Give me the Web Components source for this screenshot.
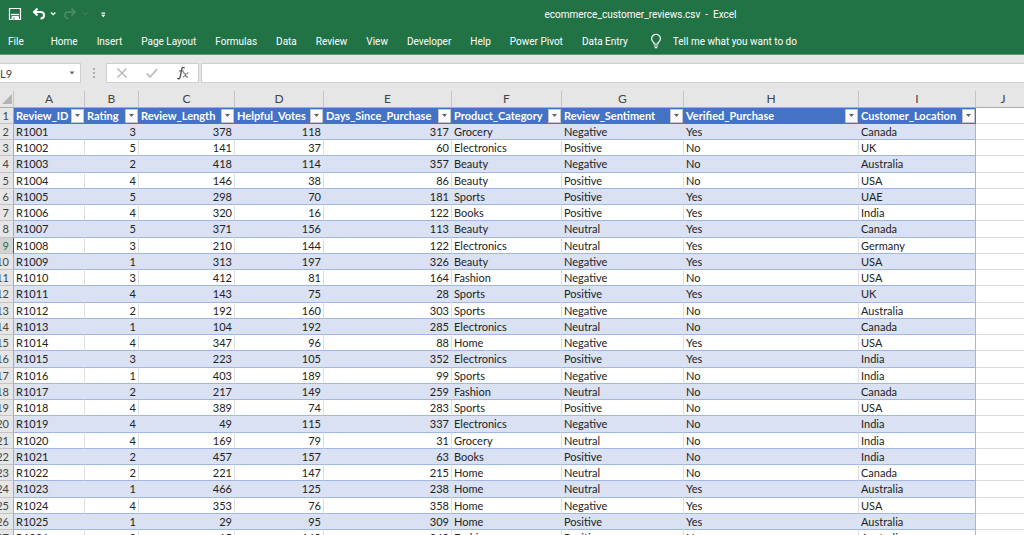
<!DOCTYPE html>
<html lang="en">
<head>
<meta charset="utf-8">
<title>ecommerce_customer_reviews.csv - Excel</title>
<style>
html, body { margin: 0; height: 100%; }
body { overflow: hidden; background: #fff; }
</style>
</head>
<body>
<excel-app></excel-app>

<template id="t-app">
  <style>
    :host { display: flex; flex-direction: column; height: 100%; overflow: hidden; font-family: Roboto, "Open Sans", sans-serif; font-size: 10px; color: #fff; }
  </style>
  <title-bar>ecommerce_customer_reviews.csv&nbsp; -&nbsp; Excel</title-bar>
  <ribbon-tabs>
    <ribbon-tab>File</ribbon-tab>
    <ribbon-tab>Home</ribbon-tab>
    <ribbon-tab>Insert</ribbon-tab>
    <ribbon-tab>Page Layout</ribbon-tab>
    <ribbon-tab>Formulas</ribbon-tab>
    <ribbon-tab>Data</ribbon-tab>
    <ribbon-tab>Review</ribbon-tab>
    <ribbon-tab>View</ribbon-tab>
    <ribbon-tab>Developer</ribbon-tab>
    <ribbon-tab>Help</ribbon-tab>
    <ribbon-tab>Power Pivot</ribbon-tab>
    <ribbon-tab>Data Entry</ribbon-tab>
  </ribbon-tabs>
  <formula-bar></formula-bar>
  <sheet-grid></sheet-grid>
</template>

<template id="t-title">
  <style>
    :host { display: grid; grid-template-columns: 1fr auto 1fr; align-items: center; height: 28px; background: #217346; }
    .tools { display: flex; align-items: center; padding-left: 8px; }
    button { display: flex; align-items: center; border: 0; padding: 0; background: none; color: inherit; }
    .gap { margin-left: 10px; }
    .off { color: #4c8f6b; }
    .name { grid-column: 2; padding-left: 257px; }
    svg { display: block; }
  </style>
  <div class="tools">
    <button aria-label="Save"><svg width="14" height="14" viewBox="0 0 14 14" fill="none" stroke="currentColor"><path d="M1.500 1.500h11v11h-11z" stroke-width="1.200"/><path d="M3 7.500h8" stroke-width="1.400"/><path d="M4 12.500v-3h6.500v3z" fill="currentColor"/><path d="M6 10.500v2" stroke="#217346"/></svg></button>
    <button class="gap" aria-label="Undo"><svg width="14" height="14" viewBox="0 0 14 14" fill="none" stroke="currentColor" stroke-width="2"><path d="M5.500 1.500L2 5l3.500 3.500M2 5h6.500c2 0 3.500 1.300 3.500 3.200s-1.500 3.300-3.500 3.300"/></svg></button>
    <button aria-label="Undo list"><svg width="14" height="14" viewBox="0 0 14 14" fill="none" stroke="currentColor" stroke-width="1.300"><path d="M5 5.500l2.200 2.200L9.400 5.500"/></svg></button>
    <button class="off" aria-label="Redo"><svg width="18" height="14" viewBox="0 0 18 14" fill="none" stroke="currentColor" stroke-width="1.500"><path d="M11.500 1.500L15 5l-3.500 3.500M15 5H8.500C6.500 5 5 6.300 5 8.200s1.500 3.300 3.500 3.300"/></svg></button>
    <button class="off" aria-label="Redo list"><svg width="14" height="14" viewBox="0 0 14 14" fill="none" stroke="currentColor"><path d="M5 5.500l2.200 2.200L9.400 5.500"/></svg></button>
    <button aria-label="Customize toolbar"><svg width="22" height="14" viewBox="0 0 22 14" fill="currentColor"><path d="M9.500 5.500h3.600v1.200H9.500zM9.200 7.800h4.200l-2.100 2.400z"/></svg></button>
  </div>
  <span class="name"><slot></slot></span>
</template>

<template id="t-tabs">
  <style>
    :host { display: flex; align-items: center; gap: 19px; height: 26px; padding: 0 8px; background: #217346; }
    ::slotted(:first-child) { margin-right: 8px; }
    button { display: flex; align-items: center; gap: 10px; border: 0; padding: 0 0 0 2px; background: none; font: inherit; color: inherit; white-space: nowrap; }
    svg { display: block; }
  </style>
  <slot></slot>
  <button><svg width="14" height="16" viewBox="0 0 14 16" fill="none" stroke="currentColor" stroke-width="1.200"><path d="M5 11V9.800C3.500 8.800 2.600 7.500 2.600 5.800a4.400 4.400 0 0 1 8.800 0c0 1.700-.9 3-2.400 4V11z"/><path d="M5 13h4M5.700 14.600h2.600"/></svg>Tell me what you want to do</button>
</template>

<template id="t-tab">
  <style>
    :host { display: block; }
    button { display: block; border: 0; padding: 0; background: none; font: inherit; color: inherit; white-space: nowrap; }
  </style>
  <button><slot></slot></button>
</template>

<template id="t-formula">
  <style>
    :host { display: flex; align-items: center; padding: 8px 0; background: #e6e6e6; border-top: 1px solid #5c9a78; color: #444; }
    .box { display: flex; align-items: center; height: 18px; background: #fff; border: 1px solid #cfcfcf; }
    .name { width: 80px; border-left: 0; }
    input { flex: 1; min-width: 0; width: 0; height: 18px; box-sizing: border-box; border: 0; padding: 0; background: none; outline: 0; font: 11px Lato, sans-serif; color: #444; }
    button { display: flex; justify-content: center; border: 0; padding: 0; background: none; flex: 1; }
    .name button { flex: none; width: 16px; }
    .dots { width: 25px; }
    .tools { width: 91px; margin-right: 2px; }
    .text { flex: 1; border-right: 0; }
    svg { display: block; }
  </style>
  <div class="box name"><input aria-label="Name box" value="L9"><button aria-label="Names"><svg width="8" height="6" viewBox="0 0 8 6" fill="#666"><path d="M1.500 1.500h5L4 4.500z"/></svg></button></div>
  <svg class="dots" width="25" height="12" viewBox="0 0 25 12" fill="#aaa"><path d="M12 1h2v2h-2zM12 5h2v2h-2zM12 9h2v2h-2z"/></svg>
  <div class="box tools">
    <button aria-label="Cancel"><svg width="12" height="12" viewBox="0 0 12 12" fill="none" stroke="#bababa" stroke-width="1.500"><path d="M1.500 1.500l9 9M10.500 1.500l-9 9"/></svg></button>
    <button aria-label="Enter"><svg width="12" height="12" viewBox="0 0 12 12" fill="none" stroke="#bababa" stroke-width="1.800"><path d="M.8 6.500l3.200 3.500L11.200 2"/></svg></button>
    <button aria-label="Insert function"><svg width="14" height="14" viewBox="0 0 14 14" fill="none" stroke="#555" stroke-linecap="round"><path d="M8.200 1.800C6.900.8 6 1.800 5.700 3.400L4.300 10.400C4 12.300 3 13.300 1.700 12.500" stroke-width="1.400"/><path d="M3.500 5h4" /><path d="M7.300 6.800c1.500-.5 1.700.5 2.200 2.300s.8 2.800 2.300 1.900M12 6.700C10.300 6.800 9 10.900 7.200 11.200"/></svg></button>
  </div>
  <div class="box text"><input aria-label="Formula bar"></div>
</template>

<template id="t-grid">
  <style>
    :host { display: block; flex: 1; min-height: 0; overflow: hidden; background: #e6e6e6; font: 11px/14px Lato, "Liberation Sans", sans-serif; color: #222; }
    table { width: 100%; table-layout: fixed; border-collapse: separate; border-spacing: 0; background: #fff; }
    th, td { box-sizing: border-box; height: 16px; padding: 0 2px; white-space: nowrap; overflow: hidden; text-align: left; font-weight: 400; line-height: 14px; border-bottom: 1px solid #dcdcdc; border-right: 1px solid #dedede; }
    tbody tr:nth-child(4n) > * { height: 17px; }
    thead th { height: 17px; background: #e6e6e6; text-align: center; font-size: 12px; color: #444; border-right-color: #c4c4c4; border-bottom-color: #ababab; }
    thead th:last-child { padding-left: 8px; border-right: 0; }
    .row { background: #e6e6e6; color: #444; padding: 0; border-right-color: #ababab; border-bottom-color: #c4c4c4; }
    .row span { display: flex; justify-content: flex-end; width: 9px; }
    .row.sel { background: #d2d2d2; color: #217346; border-right-color: #217346; }
    .corner svg { display: block; margin-left: auto; }
    thead .corner { padding: 0; }
    td.n { text-align: right; }
    tr.data td { border-bottom-color: #9fb7e2; }
    tr.band td { background: #d9e1f2; border-right-color: #d9e1f2; }
    tr.data td.last { border-right-color: #9fb7e2; }
    tr td.out, tr.band td.out { background: #fff; border-bottom-color: #dcdcdc; border-right: 0; }
    .fields th.f { background: #4472c4; color: #fff; font-weight: 700; border-color: #4472c4; padding-right: 0; }
    .f div { display: flex; align-items: center; justify-content: space-between; height: 15px; }
    .f button { flex: none; display: flex; align-items: center; justify-content: center; width: 13px; height: 14px; border: 1px solid #c6c6c6; padding: 0; background: #fafafa; }
  </style>
  <table>
    <colgroup></colgroup>
    <thead><tr></tr></thead>
    <tbody></tbody>
  </table>
</template>

<script>
const define = (name, id, setup) => customElements.define(name, class extends HTMLElement {
  constructor() {
    super();
    this.attachShadow({ mode: 'open' }).append(document.getElementById(id).content.cloneNode(true));
    if (setup) setup(this.shadowRoot);
  }
});

const columns = [['A', 71, 'Review_ID'], ['B', 54, 'Rating'], ['C', 96, 'Review_Length'], ['D', 89, 'Helpful_Votes'], ['E', 128, 'Days_Since_Purchase'], ['F', 110, 'Product_Category'], ['G', 122, 'Review_Sentiment'], ['H', 175, 'Verified_Purchase'], ['I', 117, 'Customer_Location']];

const reviews = `3,378,118,317,Grocery,Negative,Yes,Canada
5,141,37,60,Electronics,Positive,No,UK
2,418,114,357,Beauty,Negative,No,Australia
4,146,38,86,Beauty,Positive,No,USA
5,298,70,181,Sports,Positive,Yes,UAE
4,320,16,122,Books,Positive,Yes,India
5,371,156,113,Beauty,Neutral,Yes,Canada
3,210,144,122,Electronics,Neutral,Yes,Germany
1,313,197,326,Beauty,Negative,Yes,USA
3,412,81,164,Fashion,Negative,No,USA
4,143,75,28,Sports,Positive,Yes,UK
2,192,160,303,Sports,Negative,No,Australia
1,104,192,285,Electronics,Neutral,No,Canada
4,347,96,88,Home,Negative,Yes,USA
3,223,105,352,Electronics,Positive,Yes,India
1,403,189,99,Sports,Negative,No,India
2,217,149,259,Fashion,Neutral,No,Canada
4,389,74,283,Sports,Positive,No,USA
4,49,115,337,Electronics,Negative,No,India
4,169,79,31,Grocery,Neutral,No,India
2,457,157,63,Books,Positive,No,India
2,221,147,215,Home,Neutral,No,Canada
1,466,125,238,Home,Neutral,Yes,Australia
4,353,76,358,Home,Negative,Yes,USA
1,29,95,309,Home,Positive,Yes,Australia
3,15,160,340,Fashion,Positive,No,Australia`.split('\n').map((line, i) => ['R' + (1001 + i), ...line.split(',')]);

define('ribbon-tab', 't-tab');
define('ribbon-tabs', 't-tabs');
define('title-bar', 't-title');
define('formula-bar', 't-formula');
define('sheet-grid', 't-grid', root => {
  root.querySelector('colgroup').innerHTML = '<col style="width:14px">' + columns.map(c => `<col style="width:${c[1]}px">`).join('') + '<col>';
  root.querySelector('thead tr').innerHTML = '<th class="corner"><svg width="12" height="12" viewBox="0 0 12 12"><path d="M11 1v10H1z" fill="#b4b4b4"/></svg></th>' + columns.map(c => `<th scope="col">${c[0]}</th>`).join('') + '<th scope="col">J</th>';
  const rowHead = n => `<th scope="row" class="row${n === 9 ? ' sel' : ''}"><span>${n}</span></th>`;
  const fields = `<tr class="fields">${rowHead(1)}${columns.map(c => `<th scope="col" class="f"><div><span>${c[2]}</span><button aria-label="Filter ${c[2]}"><svg width="7" height="5" viewBox="0 0 7 5"><path d="M1 1h5L3.500 4z" fill="#666"/></svg></button></div></th>`).join('')}<td class="out"></td></tr>`;
  root.querySelector('tbody').innerHTML = fields + reviews.map((r, i) => `<tr class="data${i % 2 ? '' : ' band'}">${rowHead(i + 2)}${r.map((v, k) => `<td class="${k > 0 && k < 5 ? 'n' : ''}${k === 8 ? 'last' : ''}">${v}</td>`).join('')}<td class="out"></td></tr>`).join('');
});
define('excel-app', 't-app');
</script>
</body>
</html>
